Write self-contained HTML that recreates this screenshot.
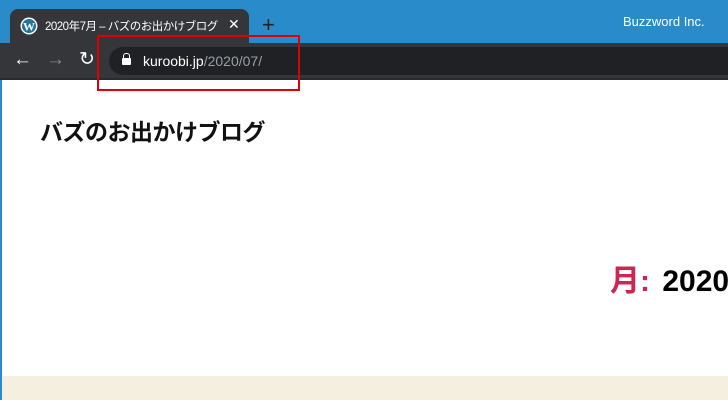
<!DOCTYPE html><html><head><meta charset="utf-8"><style>
body{margin:0;width:728px;height:400px;overflow:hidden;position:relative;font-family:"Liberation Sans","Noto Sans CJK JP",sans-serif;background:#fff}
#w{position:absolute;left:0;top:0;width:728px;height:400px;overflow:hidden}
.a{position:absolute}
</style></head><body><div id="w">
<div class="a" style="left:0;top:0;width:728px;height:43px;background:#2a8bcb"></div>
<div class="a" style="left:10px;top:9px;width:239px;height:40px;background:#35363a;border-radius:8px 8px 0 0"></div>
<svg class="a" style="left:20px;top:17px" width="18" height="18" viewBox="0 0 18 18"><circle cx="9" cy="9" r="8.5" fill="#fff"/><circle cx="9" cy="9" r="7" fill="#21759b"/><text x="9" y="13.5" font-size="12" font-weight="bold" text-anchor="middle" fill="#fff" font-family="Liberation Serif">W</text></svg>
<div class="a" style="left:45px;top:18px;font-size:11.5px;color:#fff;letter-spacing:-0.5px;white-space:nowrap">2020年7月 – バズのお出かけブログ</div>
<div class="a" style="left:228px;top:16px;font-size:14px;color:#fff">✕</div>
<div class="a" style="left:262px;top:12px;font-size:22px;color:#222">+</div>
<div class="a" style="left:623px;top:14px;font-size:13px;color:#fff">Buzzword Inc.</div>
<div class="a" style="left:0;top:43px;width:728px;height:35px;background:#35363a"></div>
<div class="a" style="left:0;top:78px;width:728px;height:2px;background:#2a2b2e"></div>
<div class="a" style="left:13px;top:49px;font-size:19px;color:#fff">←</div>
<div class="a" style="left:46px;top:49px;font-size:19px;color:#8a8b8d">→</div>
<div class="a" style="left:79px;top:48px;font-size:19px;color:#fff">↻</div>
<div class="a" style="left:109px;top:47px;width:640px;height:28px;background:#202124;border-radius:14px"></div>
<div class="a" style="left:122px;top:58px;width:9px;height:7px;background:#fff;border-radius:1px"></div>
<div class="a" style="left:123px;top:53px;width:5px;height:5px;border:1.5px solid #fff;border-bottom:0;border-radius:3px 3px 0 0"></div>
<div class="a" style="left:143px;top:53px;font-size:14px;color:#fff">kuroobi.jp<span style="color:#9aa0a6">/2020/07/</span></div>
<div class="a" style="left:97px;top:35px;width:199px;height:52px;border:2px solid #e00000"></div>
<div class="a" style="left:0;top:80px;width:2px;height:320px;background:#2a8bcb"></div>
<div class="a" style="left:40px;top:113px;font-size:23px;font-weight:bold;color:#111;letter-spacing:-0.5px;white-space:nowrap">バズのお出かけブログ</div>
<div class="a" style="left:610px;top:256px;font-size:30px;font-weight:bold;color:#cd2653;white-space:nowrap">月:&nbsp;<span style="color:#000;margin-left:4px">2020年7月</span></div>
<div class="a" style="left:2px;top:376px;width:726px;height:24px;background:#f5efe0"></div>
</div></body></html>
